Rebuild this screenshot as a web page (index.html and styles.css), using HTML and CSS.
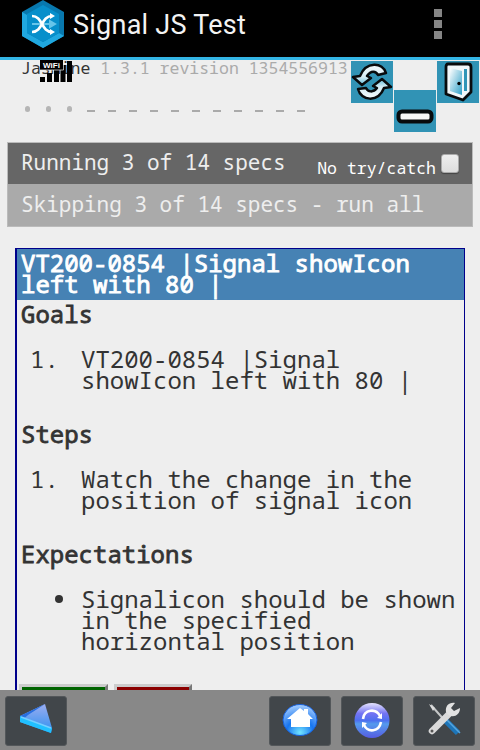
FILE: index.html
```html
<!DOCTYPE html>
<html lang="en">
<head>
<meta charset="utf-8">
<title>Signal JS Test</title>
<link rel="stylesheet" href="styles.css">
</head>
<body>
<header class="appbar">
  <svg class="logo" width="42" height="48" viewBox="0 0 42 48">
    <path d="M21 0L42 12V36L21 48L0 36V12Z" fill="#0878ae"/>
    <path d="M0 12L5 15V33L21 42L37 33L42 36L21 48L0 36Z" fill="#20a8e0"/>
    <path d="M21 5L37 14V33L21 42L5 33V14Z" fill="#078fcb"/>
    <path d="M10 24H30M28 21L33 24L28 27Z" stroke="#67c5ea" stroke-width="2" fill="#67c5ea"/>
    <path d="M10 16C21 16 19 32 30 32M10 32C21 32 19 16 30 16" fill="none" stroke="#fff" stroke-width="2.600"/>
    <path d="M28 13L33 16L28 19ZM28 29L33 32L28 35Z" fill="#fff"/>
  </svg>
  <h1>Signal JS Test</h1>
  <div class="overflow"><i></i><i></i><i></i></div>
</header>
<main class="page">
  <div class="banner"><span class="name">Jasmine</span> 1.3.1 revision 1354556913</div>
  <div class="symbols"><i class="dot"></i><i class="dot"></i><i class="dot"></i><i></i><i></i><i></i><i></i><i></i><i></i><i></i><i></i><i></i><i></i><i></i></div>
  <section class="alert">
    <div class="bar running"><span>Running 3 of 14 specs</span><label class="catch">No try/catch<b class="box"></b></label></div>
    <div class="bar skipping">Skipping 3 of 14 specs - run all</div>
  </section>
  <section class="spec">
    <h2>VT200-0854 |Signal showIcon left with 80 |</h2>
    <div class="details">
      <h3>Goals</h3>
      <div class="item"><span class="marker">1.</span><p>VT200-0854 |Signal showIcon left with 80 |</p></div>
      <h3>Steps</h3>
      <div class="item"><span class="marker">1.</span><p>Watch the change in the position of signal icon</p></div>
      <h3>Expectations</h3>
      <div class="item"><span class="marker bullet"><i></i></span><p>Signalicon should be shown in the specified horizontal position</p></div>
      <div class="results"><div class="pass"></div><div class="fail"></div></div>
    </div>
  </section>
</main>
<footer class="toolbar">
  <div class="tool back"><svg width="60" height="48" viewBox="0 0 60 48">
    <defs><linearGradient id="tri" x1="0" y1="0" x2="0" y2="1"><stop offset="0" stop-color="#9cadf0"/><stop offset="1" stop-color="#2c8ff0"/></linearGradient></defs>
    <path d="M39 7L14 19V25L45 36L46 31Z" fill="url(#tri)"/><path d="M39 7L14 19V25L22 18Z" fill="#286fe0"/><path d="M14 19L46 31L45 36L14 25Z" fill="#20c0ff"/><path d="M15 20L45 31" stroke="#75ceff" stroke-width="1.5"/>
  </svg></div>
  <div class="tool"><svg width="60" height="48" viewBox="0 0 60 48">
    <defs><radialGradient id="home" cy=".9" r=".9"><stop offset="0" stop-color="#72e5ff"/><stop offset=".45" stop-color="#1775f0"/><stop offset="1" stop-color="#a7cfff"/></radialGradient></defs>
    <ellipse cx="30" cy="23" rx="17" ry="15.500" fill="url(#home)" stroke="#1760dc"/>
    <path d="M30 11L34 14V12H38V17L43 22H40V30H21V22H17Z" fill="#fff"/>
  </svg></div>
  <div class="tool"><svg width="60" height="48" viewBox="0 0 60 48">
    <defs><linearGradient id="orb" x1="0" y1="0" x2="0" y2="1"><stop offset="0" stop-color="#e6e4ff"/><stop offset=".3" stop-color="#7474f3"/><stop offset=".5" stop-color="#4e70ef"/><stop offset=".6" stop-color="#559bed"/><stop offset="1" stop-color="#555ce2"/></linearGradient></defs>
    <circle cx="30" cy="23.500" r="17.500" fill="url(#orb)"/>
    <path d="M21 22C22 12 34 11 38 19M39 25C37 35 26 36 22 28" fill="none" stroke="#fff" stroke-width="2.600"/>
    <path d="M35 21L40 16V22ZM20 25V31L25 26Z" fill="#fff"/>
  </svg></div>
  <div class="tool"><svg width="60" height="48" viewBox="0 0 60 48">
    <path d="M17 8L32 25" stroke="#c5c7c8" stroke-width="2"/><path d="M15 7L21 11L19 14Z" fill="#ddd"/>
    <path d="M31 23L44 36" stroke="#1d75b8" stroke-width="6"/><path d="M33 23L46 36" stroke="#55a5df" stroke-width="1.5"/>
    <path d="M18 34L36 16" stroke="#dadada" stroke-width="6.500" stroke-linecap="round"/>
    <path d="M41 6C35 5 31 9 32 15C36 22 46 20 46 11L40 14L37 11Z" fill="#e2e2e2"/><circle cx="18" cy="34" r="1.5" fill="#555"/>
  </svg></div>
</footer>
<svg class="signal" width="32" height="22" viewBox="0 0 32 22">
  <path d="M0 17H5V22H0ZM7 13H12V22H7ZM14 9H19V22H14ZM20.500 5H25.500V22H20.500ZM27 1H32V22H27Z"/>
  <path d="M0 0H23V10H0Z"/><path d="M0 10H23.500V0" fill="none" stroke="#eee" stroke-width=".7"/>
  <text x="3" y="7.500" class="wifi" textLength="17" lengthAdjust="spacingAndGlyphs">WiFi</text>
</svg>
<div class="action reload"><svg width="42" height="42" viewBox="0 0 42 42">
  <defs><linearGradient id="ice" x1="0" y1="0" x2="0" y2="1"><stop offset="0" stop-color="#f4fafc"/><stop offset=".6" stop-color="#d5edf5"/><stop offset="1" stop-color="#65bcd9"/></linearGradient>
  <linearGradient id="ice2" x1="0" y1="1" x2="0" y2="0"><stop offset="0" stop-color="#f4fafc"/><stop offset=".6" stop-color="#d5edf5"/><stop offset="1" stop-color="#65bcd9"/></linearGradient></defs>
  <g stroke="#080b0d" stroke-width="2.500" stroke-linejoin="round">
  <path fill="url(#ice)" d="M35 12C32 1 15 0 9 15L2 16L11 24L20 17L16 15C20 9 25 10 27 14Z"/><path fill="url(#ice2)" d="M7 28C10 40 27 42 33 27L40 26L31 18L22 25L26 27C22 32 17 31 15 27Z"/></g>
</svg></div>
<div class="action minimize"><svg width="42" height="42" viewBox="0 0 42 42"><rect x="4.500" y="21.500" width="33" height="10" rx="3.500" fill="#f7f7f7" stroke="#080b0d" stroke-width="4"/></svg></div>
<div class="action exit"><svg width="42" height="42" viewBox="0 0 42 42">
  <defs><linearGradient id="door" x1="0" y1="0" x2="1" y2="1"><stop offset="0" stop-color="#fff"/><stop offset="1" stop-color="#2d9fc7"/></linearGradient></defs>
  <path d="M11 3H31Q34 3 34 6V31L30 35L26 39L9 33V6Q9 3 11 3Z" fill="#f1f7fa" stroke="#080b0d" stroke-width="2.800" stroke-linejoin="round"/>
  <path d="M13 7L25 10V34L13 30Z" fill="url(#door)"/><path d="M27 8H30V30H27Z" fill="#2f95b8"/><circle cx="22" cy="22.500" r="1.700"/>
</svg></div>
</body>
</html>
```
FILE: styles.css
```css
* { box-sizing: border-box; }
body {
  margin: 0;
  height: 750px;
  overflow: hidden;
  display: flex;
  flex-direction: column;
  position: relative;
  background: #eee;
  color: #333;
  font-family: "Droid Sans Mono", "Noto Sans Mono", "DejaVu Sans Mono", monospace;
}
svg { display: block; }
h1, h2, h3, p { margin: 0; }
.appbar {
  flex: 0 0 60px;
  display: flex;
  align-items: flex-start;
  background: #000;
  border-bottom: 3px solid #33b5e5;
  padding-left: 22px;
}
.appbar h1 {
  margin-left: 9px;
  font: 400 27px/51px Roboto, sans-serif;
  letter-spacing: 0.25px;
  color: #f3f3f3;
}
.overflow { margin: 9px 38px 0 auto; display: grid; gap: 3px; }
.overflow i { width: 8px; height: 8px; background: #858585; }
.page { flex: 1; min-height: 0; overflow: hidden; padding: 0 7px; }
.banner {
  height: 33px;
  padding-left: 14px;
  font-size: 16.5px;
  line-height: 16px;
  color: #aaa;
  white-space: pre;
}
.name { color: #333; }
.symbols { height: 49px; padding: 13px 0 0 18px; display: flex; gap: 13px; }
.symbols i { width: 8px; height: 2px; margin: 4px 0 0 -1px; margin-right: 1px; background: #aaa; }
.symbols .dot { width: 5px; height: 6px; margin: 0 3px 0 0; border-radius: 3px; background: #b5b5b5; }
.alert { width: 466px; border: 1px solid #bbb; }
.bar { height: 42px; padding-left: 13px; font-size: 21px; line-height: 39px; color: #eee; white-space: nowrap; }
.running { height: 41px; background: #666; display: flex; justify-content: space-between; }
.skipping { background: #aaa; line-height: 41px; }
.catch { display: flex; padding-right: 13px; font-size: 16.5px; line-height: 50px; color: #fff; }
.box {
  width: 18px;
  height: 19px;
  margin: 11px 0 0 5px;
  border: 1px solid #aaa;
  border-radius: 3px;
  background: linear-gradient(#eee, #ddd);
  box-shadow: 0 1px 1px #444;
}
.spec {
  width: 450px;
  margin: 21px 0 0 8px;
  border: solid #00008b;
  border-width: 1px 1px 1px 2px;
  font-size: 24px;
  line-height: 21px;
}
.spec h2 {
  height: 51px;
  padding: 3px 20px 0 4px;
  background: #4682b4;
  color: #fff;
  font-size: 24px;
  font-weight: 400;
  -webkit-text-stroke: 0.9px #fff;
}
.details { padding: 3px 0 0 4px; }
.spec h3 { font-size: 24px; font-weight: 400; -webkit-text-stroke: 0.8px #333; }
.item { display: flex; margin: 24px 0 33px; }
.marker { flex: 0 0 60px; padding-left: 9px; }
.bullet { padding: 7px 0 0 34px; }
.bullet i { display: block; width: 8px; height: 8px; border-radius: 50%; background: #333; }
.item p { flex: 1; }
.results { display: flex; gap: 6px; margin-left: -2px; }
.results div { height: 48px; border: 3px outset #ccc; }
.results .pass { width: 89px; background: #006400; }
.results .fail { width: 78px; background: #8b0000; }
.toolbar { flex: 0 0 60px; display: flex; gap: 10px; padding: 6px 5px 0 5px; background: #888; }
.tool { width: 62px; height: 50px; border: 1px solid #53575a; border-radius: 3px; background: #41464a; }
.back { margin-right: auto; }
.signal { position: absolute; left: 40px; top: 60px; }
.wifi { font: bold 8px "Liberation Sans", sans-serif; fill: #fff; }
.action { position: absolute; width: 42px; height: 42px; background: #3193b5; }
.reload { left: 351px; top: 61px; }
.minimize { left: 394px; top: 90px; }
.exit { left: 437px; top: 61px; }
```
